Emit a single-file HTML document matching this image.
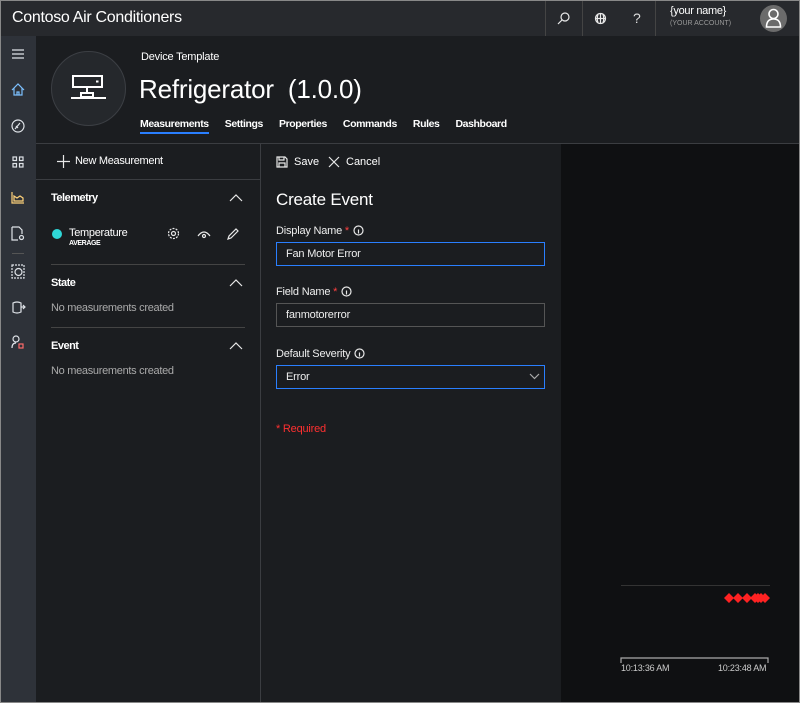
<!DOCTYPE html>
<html><head><meta charset="utf-8"><style>
*{box-sizing:border-box;margin:0;padding:0}
body{width:800px;height:703px;overflow:hidden;background:#1b1d20;font-family:"Liberation Sans",sans-serif;color:#fff;position:relative;font-size:12px}
.a{position:absolute}
svg{position:absolute;fill:none;stroke:#e8e8e8;stroke-width:1.2}
.nav svg{stroke:#dfe3e8}
.lbl{font-size:11px;color:#eee;letter-spacing:-0.2px}
.inp{position:absolute;left:276px;width:269px;height:24px;border:1px solid #555;font-size:11px;padding:5px 9px;color:#eee;letter-spacing:-0.2px}
</style></head><body>
<div class="a" style="left:0;top:0;width:800px;height:703px;border:1px solid #888;z-index:9;pointer-events:none"></div>
<div class="a" style="left:0;top:0;width:800px;height:36px;background:#27292d"></div>
<div class="a" style="left:12px;top:9px;font-size:16px;color:#fff;letter-spacing:-0.3px">Contoso Air Conditioners</div>
<div class="a" style="left:545px;top:0;width:1px;height:36px;background:#444"></div>
<div class="a" style="left:582px;top:0;width:1px;height:36px;background:#444"></div>
<div class="a" style="left:655px;top:0;width:1px;height:36px;background:#444"></div>
<svg style="left:557px;top:11px" width="14" height="14"><circle cx="8" cy="6" r="4"/><path d="M5 9L1 13"/></svg>
<svg style="left:594px;top:12px" width="13" height="13"><circle cx="6.5" cy="6.5" r="5"/><path d="M1.5 6.5h10M6.5 1.5v10M4 2.5q-1.5 4 0 8M9 2.5q1.5 4 0 8"/></svg>
<div class="a" style="left:633px;top:10px;font-size:14px;color:#ddd">?</div>
<div class="a" style="left:670px;top:5px;font-size:11px;letter-spacing:-0.3px">{your name}</div>
<div class="a" style="left:670px;top:20px;font-size:7px;color:#999">(YOUR ACCOUNT)</div>
<div class="a" style="left:760px;top:5px;width:27px;height:27px;border-radius:50%;background:#6b6b6b"></div>
<svg style="left:763px;top:7px;stroke:#fff;stroke-width:1.6" width="21" height="22"><circle cx="10.5" cy="7" r="4.5"/><path d="M3.5 20q0-8 7-8t7 8z"/></svg>
<div class="a nav" style="left:0;top:36px;width:36px;height:667px;background:#2e3239">
<svg style="left:11px;top:13px" width="14" height="10"><path d="M1 1h12M1 5h12M1 9h12"/></svg>
<svg style="left:11px;top:47px;stroke:#7cc0ff" width="14" height="14"><path d="M1 7L7 1l6 6M3 5v7h8V5M6 12V9h2v3"/></svg>
<svg style="left:11px;top:83px" width="14" height="14"><circle cx="7" cy="7" r="6"/><path d="M4 10l5-6M5 7l2 2"/></svg>
<svg style="left:12px;top:120px" width="12" height="12"><rect x="1" y="1" width="3.5" height="3.5"/><rect x="7.5" y="1" width="3.5" height="3.5"/><rect x="1" y="7.5" width="3.5" height="3.5"/><rect x="7.5" y="7.5" width="3.5" height="3.5"/></svg>
<svg style="left:11px;top:155px;stroke:#ffd27a" width="14" height="13"><path d="M1 1v11h12M3 10V5l3 2 3-2 3 2v3z"/></svg>
<svg style="left:11px;top:190px" width="14" height="15"><path d="M1 1h7l3 3v4M1 1v13h6"/><circle cx="10.5" cy="11.5" r="2"/></svg>
<div class="a" style="left:12px;top:217px;width:12px;height:1px;background:#555"></div>
<svg style="left:11px;top:228px" width="14" height="15"><rect x="1" y="1" width="12" height="13" stroke-dasharray="2 1"/><circle cx="7.5" cy="8" r="3.5"/></svg>
<svg style="left:11px;top:264px" width="15" height="14"><path d="M2 3q4-2 8 0v9q-4 2-8 0zM10 7h4M12 5l2 2-2 2"/></svg>
<svg style="left:11px;top:299px" width="14" height="14"><circle cx="5" cy="4" r="3"/><path d="M1 13q0-5 4-5"/><rect x="8" y="9" width="4" height="4" stroke="#ff6b6b"/></svg>
</div>
<div class="a" style="left:51px;top:51px;width:75px;height:75px;border-radius:50%;background:#25282c;border:1px solid #3c3f44"></div>
<svg style="left:70px;top:74px;stroke:#fff;stroke-width:2" width="37" height="29"><rect x="3" y="2" width="29" height="11"/><path d="M26 7.5h2.5M17 13v6M11 19v4h12v-4zM1 24h35"/></svg>
<div class="a" style="left:141px;top:51px;font-size:11px;letter-spacing:-0.2px">Device Template</div>
<div class="a" style="left:139px;top:74px;font-size:26px;letter-spacing:-0.2px">Refrigerator&nbsp; (1.0.0)</div>
<div class="a" style="left:140px;top:118px;font-size:10.5px;font-weight:bold;letter-spacing:-0.4px">
<span>Measurements</span><span style="margin-left:16px">Settings</span><span style="margin-left:16px">Properties</span><span style="margin-left:16px">Commands</span><span style="margin-left:16px">Rules</span><span style="margin-left:16px">Dashboard</span></div>
<div class="a" style="left:140px;top:132px;width:69px;height:2px;background:#2a7fff"></div>
<div class="a" style="left:36px;top:143px;width:764px;height:1px;background:#3b3d41"></div>
<div class="a" style="left:260px;top:143px;width:1px;height:560px;background:#3b3d41"></div>
<div class="a" style="left:36px;top:179px;width:224px;height:1px;background:#3b3d41"></div>
<svg style="left:57px;top:155px" width="13" height="13"><path d="M6.5 0v13M0 6.5h13"/></svg>
<div class="a" style="left:75px;top:155px;font-size:11px;letter-spacing:-0.3px">New Measurement</div>
<div class="a" style="left:51px;top:192px;font-size:11px;font-weight:bold;letter-spacing:-0.5px">Telemetry</div>
<svg style="left:229px;top:194px" width="14" height="8"><path d="M1 7l6-6 6 6"/></svg>
<div class="a" style="left:52px;top:229px;width:10px;height:10px;border-radius:50%;background:#2fd7d7"></div>
<div class="a" style="left:69px;top:227px;font-size:11px;letter-spacing:-0.3px">Temperature</div>
<div class="a" style="left:69px;top:240px;font-size:7px;font-weight:bold;letter-spacing:-0.4px">AVERAGE</div>
<svg style="left:167px;top:227px" width="13" height="13"><circle cx="6.5" cy="6.5" r="2"/><circle cx="6.5" cy="6.5" r="5" stroke-dasharray="2 1.2"/></svg>
<svg style="left:197px;top:229px" width="14" height="10"><path d="M1 7q6-8 12 0"/><circle cx="7" cy="7" r="1.5"/></svg>
<svg style="left:227px;top:227px" width="13" height="13"><path d="M1 12l1-3 7-7 2 2-7 7z"/></svg>
<div class="a" style="left:51px;top:264px;width:194px;height:1px;background:#444"></div>
<div class="a" style="left:51px;top:277px;font-size:11px;font-weight:bold;letter-spacing:-0.5px">State</div>
<svg style="left:229px;top:279px" width="14" height="8"><path d="M1 7l6-6 6 6"/></svg>
<div class="a" style="left:51px;top:302px;font-size:11px;color:#aaa;letter-spacing:-0.3px">No measurements created</div>
<div class="a" style="left:51px;top:327px;width:194px;height:1px;background:#444"></div>
<div class="a" style="left:51px;top:340px;font-size:11px;font-weight:bold;letter-spacing:-0.5px">Event</div>
<svg style="left:229px;top:342px" width="14" height="8"><path d="M1 7l6-6 6 6"/></svg>
<div class="a" style="left:51px;top:365px;font-size:11px;color:#aaa;letter-spacing:-0.3px">No measurements created</div>
<svg style="left:276px;top:156px" width="12" height="12"><path d="M1 1h8l2 2v8H1zM3 1v3h5V1M3 11V7h6v4"/></svg>
<div class="a" style="left:294px;top:156px;font-size:11px">Save</div>
<svg style="left:328px;top:156px" width="12" height="12"><path d="M1 1l10 10M11 1L1 11"/></svg>
<div class="a" style="left:346px;top:156px;font-size:11px">Cancel</div>
<div class="a" style="left:276px;top:190px;font-size:17px;letter-spacing:-0.2px">Create Event</div>
<div class="a lbl" style="left:276px;top:225px">Display Name <span style="color:#ff4040">*</span></div>
<svg style="left:353px;top:225px" width="11" height="11"><circle cx="5.5" cy="5.5" r="4.5"/><path d="M5.5 4.5v4"/></svg>
<div class="inp" style="top:242px;border-color:#2a7fff">Fan Motor Error</div>
<div class="a lbl" style="left:276px;top:286px">Field Name <span style="color:#ff4040">*</span></div>
<svg style="left:341px;top:286px" width="11" height="11"><circle cx="5.5" cy="5.5" r="4.5"/><path d="M5.5 4.5v4"/></svg>
<div class="inp" style="top:303px">fanmotorerror</div>
<div class="a lbl" style="left:276px;top:348px">Default Severity</div>
<svg style="left:354px;top:348px" width="11" height="11"><circle cx="5.5" cy="5.5" r="4.5"/><path d="M5.5 4.5v4"/></svg>
<div class="inp" style="top:365px;border-color:#2a7fff">Error</div>
<svg style="left:529px;top:373px;stroke:#aaa" width="11" height="7"><path d="M1 1l4.5 4.5L10 1"/></svg>
<div class="a" style="left:276px;top:423px;font-size:11px;color:#ff3030;letter-spacing:-0.2px">* Required</div>
<div class="a" style="left:561px;top:144px;width:238px;height:559px;background:#0f1012"></div>
<div class="a" style="left:621px;top:585px;width:149px;height:1px;background:#333"></div>
<svg style="left:722px;top:590px;stroke:none;fill:#ff2222" width="52" height="16"><path d="M2 8l5-5 5 5-5 5zM11 8l5-5 5 5-5 5zM20 8l5-5 5 5-5 5zM28 8l5-5 5 5-5 5zM31 8l5-5 5 5-5 5zM34 8l5-5 5 5-5 5zM38 8l5-5 5 5-5 5z"/></svg>
<svg style="left:620px;top:657px;stroke:#aaa" width="150" height="6"><path d="M1 6V1h147v5"/></svg>
<div class="a" style="left:621px;top:663px;font-size:9px;color:#ccc;letter-spacing:-0.2px">10:13:36 AM</div>
<div class="a" style="left:718px;top:663px;font-size:9px;color:#ccc;letter-spacing:-0.2px">10:23:48 AM</div>
</body></html>
